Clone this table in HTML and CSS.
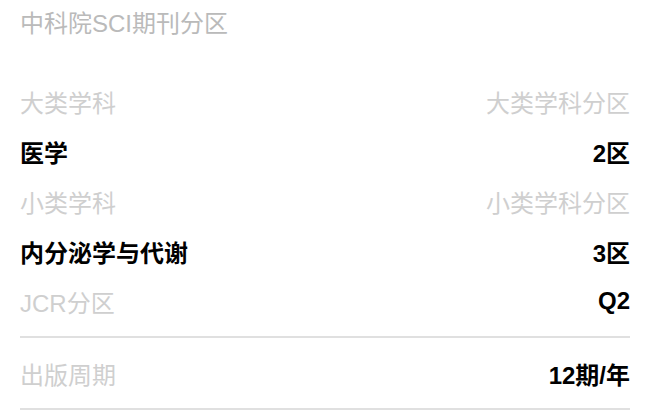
FILE: index.html
```html
<!DOCTYPE html>
<html lang="zh-CN">
<head>
    <meta charset="UTF-8">
    <meta name="viewport" content="width=device-width, initial-scale=1.0">
    <title>中科院SCI期刊分区</title>
    <link rel="stylesheet" href="styles.css">
</head>
<body>
    <div class="panel">
        <h2 class="panel-title">中科院SCI期刊分区</h2>

        <div class="section">
            <div class="row">
                <span class="label">大类学科</span>
                <span class="label">大类学科分区</span>
            </div>
            <div class="row">
                <span class="value">医学</span>
                <span class="value">2区</span>
            </div>
            <div class="row">
                <span class="label">小类学科</span>
                <span class="label">小类学科分区</span>
            </div>
            <div class="row">
                <span class="value">内分泌学与代谢</span>
                <span class="value">3区</span>
            </div>
            <div class="row">
                <span class="label">JCR分区</span>
                <span class="value">Q2</span>
            </div>
        </div>

        <div class="section">
            <div class="row">
                <span class="label">出版周期</span>
                <span class="value">12期/年</span>
            </div>
        </div>
    </div>
</body>
</html>
```

FILE: styles.css
```css
/* Estilos generales */
body {
    margin: 0;
    background: #fff;
    font-family: "Liberation Sans", Arial, "Noto Sans CJK SC", sans-serif;
    color: #000;
}

.panel {
    padding: 0 20px;
}

.panel-title {
    margin: 0 0 28px;
    font-size: 24px;
    font-weight: normal;
    line-height: 48px;
    color: #bababa;
}

.section {
    padding-bottom: 10px;
    border-bottom: 2px solid #e0e0e0;
}

.section + .section {
    padding-top: 10px;
}

.row {
    display: flex;
    justify-content: space-between;
    align-items: center;
    height: 50px;
    font-size: 24px;
}

.label {
    color: #cfcfcf;
}

.value {
    font-weight: bold;
    color: #000;
}
```
